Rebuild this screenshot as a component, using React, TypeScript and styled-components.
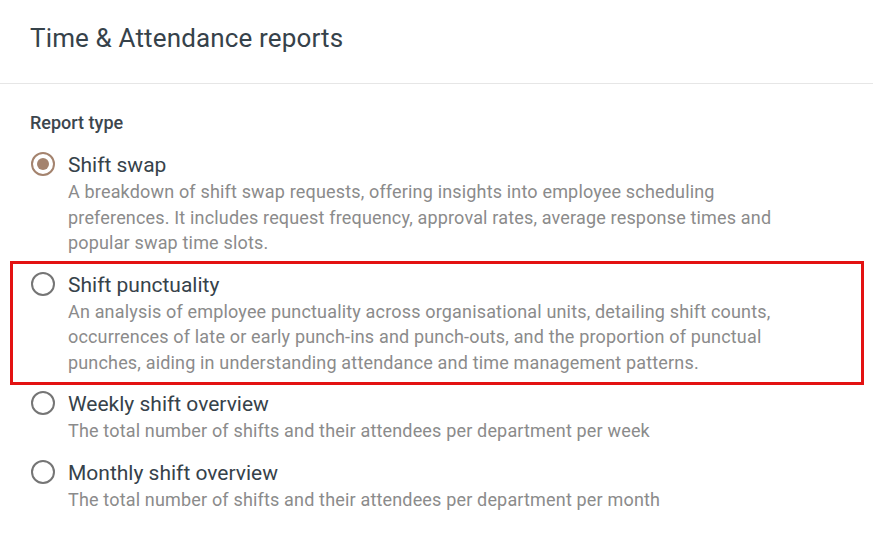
import React, { useState } from "react";
import styled, { createGlobalStyle, css } from "styled-components";

const GlobalStyle = createGlobalStyle`
  html, body {
    margin: 0;
    padding: 0;
    background: #ffffff;
  }
  body {
    font-family: Roboto, "Noto Sans", Arial, sans-serif;
    -webkit-font-smoothing: antialiased;
  }
`;

type Report = {
  id: string;
  title: string;
  description: string;
};

const reports: Report[] = [
  {
    id: "swap",
    title: "Shift swap",
    description:
      "A breakdown of shift swap requests, offering insights into employee scheduling preferences. It includes request frequency, approval rates, average response times and popular swap time slots.",
  },
  {
    id: "punctuality",
    title: "Shift punctuality",
    description:
      "An analysis of employee punctuality across organisational units, detailing shift counts, occurrences of late or early punch-ins and punch-outs, and the proportion of punctual punches, aiding in understanding attendance and time management patterns.",
  },
  {
    id: "weekly",
    title: "Weekly shift overview",
    description:
      "The total number of shifts and their attendees per department per week",
  },
  {
    id: "monthly",
    title: "Monthly shift overview",
    description:
      "The total number of shifts and their attendees per department per month",
  },
];

const HIGHLIGHTED = "punctuality";

const App = () => {
  const [selected, setSelected] = useState("swap");

  return (
    <Page>
      <GlobalStyle />
      <Header>
        <Title>Time &amp; Attendance reports</Title>
      </Header>
      <Body>
        <SectionLabel>Report type</SectionLabel>
        <OptionList>
          {reports.map((r) => (
            <Option
              key={r.id}
              $highlighted={r.id === HIGHLIGHTED}
              onClick={() => setSelected(r.id)}
            >
              <Radio $checked={selected === r.id} />
              <OptionText>
                <OptionTitle>{r.title}</OptionTitle>
                <OptionDesc>{r.description}</OptionDesc>
              </OptionText>
            </Option>
          ))}
        </OptionList>
      </Body>
    </Page>
  );
};

export default App;

const Page = styled.div`
  width: 873px;
  height: 540px;
  background: #fff;
  overflow: hidden;
`;

const Header = styled.div`
  height: 84px;
  box-sizing: border-box;
  padding: 22px 30px 0;
  border-bottom: 1px solid #e6e6e6;
`;

const Title = styled.h1`
  margin: 0;
  font-size: 26px;
  line-height: 32px;
  font-weight: 400;
  color: #36424a;
  letter-spacing: 0.15px;
`;

const Body = styled.div`
  padding: 27px 30px 0;
`;

const SectionLabel = styled.div`
  font-size: 18px;
  line-height: 24px;
  font-weight: 500;
  color: #3c464e;
  margin-bottom: 17px;
`;

const OptionList = styled.div`
  display: flex;
  flex-direction: column;
  gap: 16px;
`;

const Option = styled.label<{ $highlighted?: boolean }>`
  position: relative;
  display: flex;
  align-items: flex-start;
  gap: 13px;
  cursor: pointer;

  ${(p) =>
    p.$highlighted &&
    css`
      &::after {
        content: "";
        position: absolute;
        top: -11px;
        left: -20px;
        right: -21px;
        bottom: -10px;
        border: 3px solid #e31212;
        pointer-events: none;
      }
    `}
`;

const Radio = styled.span<{ $checked?: boolean }>`
  flex: none;
  position: relative;
  width: 24px;
  height: 24px;
  margin-left: 1px;
  box-sizing: border-box;
  border-radius: 50%;
  border: 2px solid ${(p) => (p.$checked ? "#a4836e" : "#757575")};

  ${(p) =>
    p.$checked &&
    css`
      &::before {
        content: "";
        position: absolute;
        inset: 4px;
        border-radius: 50%;
        background: #a4836e;
      }
    `}
`;

const OptionText = styled.div`
  display: flex;
  flex-direction: column;
  gap: 1px;
  max-width: 725px;
`;

const OptionTitle = styled.div`
  font-size: 21px;
  line-height: 26px;
  color: #36424a;
`;

const OptionDesc = styled.div`
  font-size: 18px;
  line-height: 25.5px;
  color: #8b8b8b;
  letter-spacing: 0.17px;
`;
